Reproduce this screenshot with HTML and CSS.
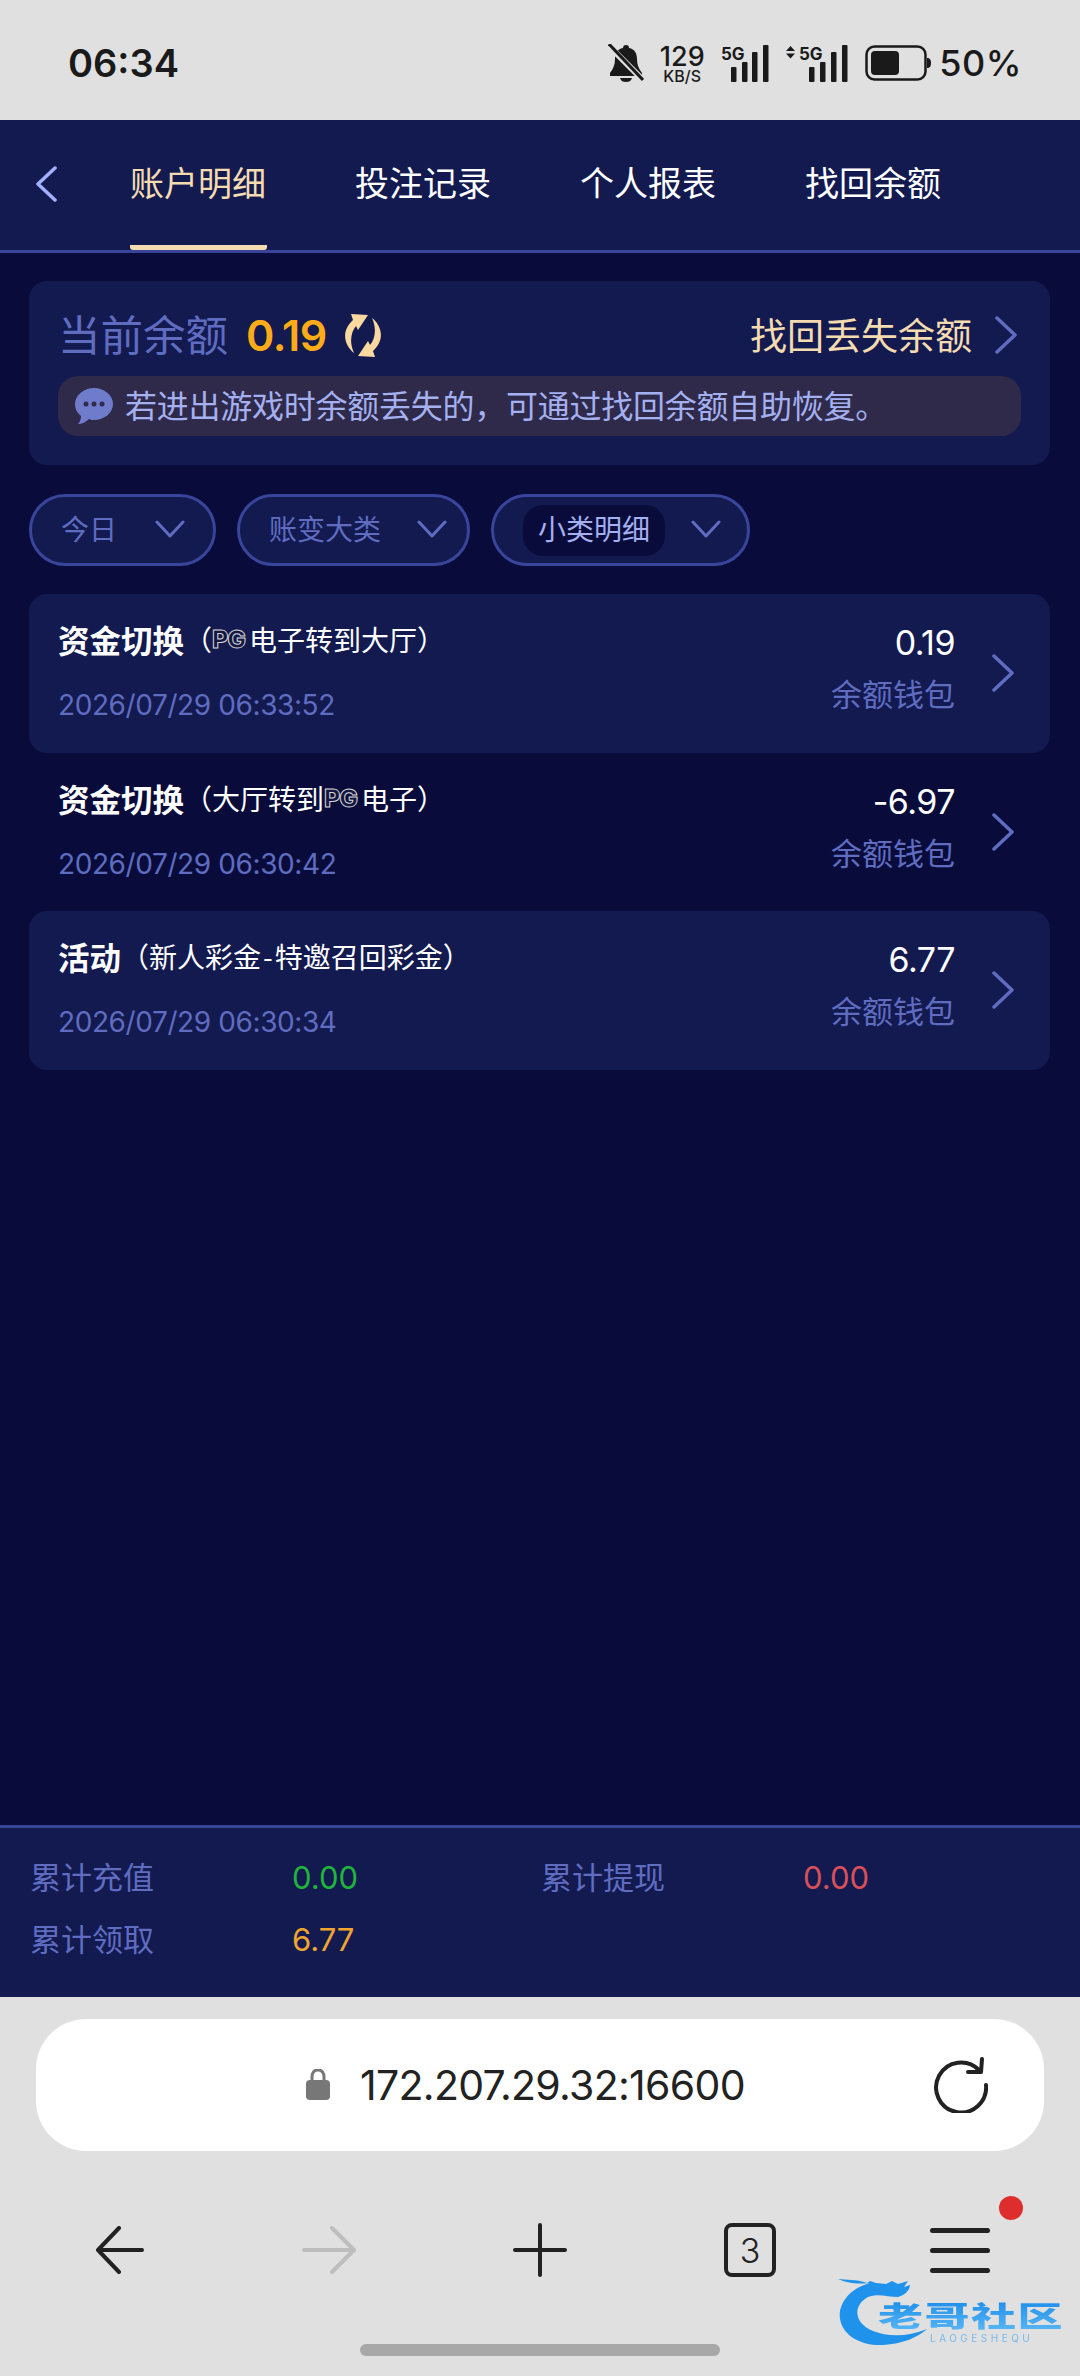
FILE: index.html
```html
<!DOCTYPE html>
<html lang="zh-CN">
<head>
    <meta charset="UTF-8">
    <meta name="viewport" content="width=device-width, initial-scale=1.0">
    <title>账户明细</title>
    <link rel="stylesheet" href="styles.css">
</head>
<body>
    <div class="status-bar">
        <div class="time">06:34</div>
        <div class="status-icons">
            <svg class="bell" width="36" height="38" viewBox="0 0 36 38">
                <path d="M18 1c2 0 3 1 3 3 6 1 8 6 8 11 0 6 2 10 5 14v3H2v-3c3-4 5-8 5-14 0-5 2-10 8-11 0-2 1-3 3-3z" fill="#1a1a1a"/>
                <path d="M12 34h12c-1 3-3 4-6 4s-5-1-6-4z" fill="#1a1a1a"/>
                <path d="M0 1l36 36" stroke="#e0e0e0" stroke-width="6"/>
                <path d="M1 0l34 36" stroke="#1a1a1a" stroke-width="3"/>
            </svg>
            <div class="speed">
                <div class="speed-num">129</div>
                <div class="speed-unit">KB/S</div>
            </div>
            <svg class="signal" width="48" height="38" viewBox="0 0 48 38">
                <text x="0" y="16" class="sig-text">5G</text>
                <rect x="10" y="23" width="5.5" height="15" rx="1"/>
                <rect x="21" y="18" width="5.5" height="20" rx="1"/>
                <rect x="31" y="8" width="5.5" height="30" rx="1"/>
                <rect x="42" y="1" width="5.5" height="37" rx="1"/>
            </svg>
            <svg class="signal" width="62" height="38" viewBox="0 0 62 38">
                <path d="M0 7l4.500-5 4.500 5zM0 9.500h9l-4.500 5z" fill="#1a1a1a"/>
                <text x="13" y="16" class="sig-text">5G</text>
                <rect x="23" y="23" width="5.500" height="15" rx="1"/>
                <rect x="34" y="18" width="5.500" height="20" rx="1"/>
                <rect x="45" y="8" width="5.500" height="30" rx="1"/>
                <rect x="56" y="1" width="5.500" height="37" rx="1"/>
            </svg>
            <svg class="battery" width="66" height="36" viewBox="0 0 66 36">
                <rect x="1.500" y="1.500" width="59" height="33" rx="8" fill="none" stroke="#1a1a1a" stroke-width="2.500"/>
                <rect x="6" y="6" width="28" height="24" rx="4" fill="#1a1a1a"/>
                <path d="M62 13c3 0 4 2 4 5s-1 5-4 5z" fill="#1a1a1a"/>
            </svg>
            <div class="battery-text">50%</div>
        </div>
    </div>

    <div class="nav">
        <svg class="nav-back" width="24" height="36" viewBox="0 0 24 36">
            <path d="M21 2L4 18l17 16" fill="none" stroke="#a4b0ff" stroke-width="3.500" stroke-linecap="round" stroke-linejoin="round"/>
        </svg>
        <div class="tabs">
            <div class="tab active">账户明细</div>
            <div class="tab">投注记录</div>
            <div class="tab">个人报表</div>
            <div class="tab">找回余额</div>
        </div>
    </div>

    <div class="main">
        <div class="balance-card">
            <div class="balance-top">
                <div class="balance-label">当前余额</div>
                <div class="balance-value">0.19</div>
                <svg class="refresh" width="42" height="43" viewBox="0 0 42 43">
                    <path d="M9 0L26 1 16 16 14 12C9 18 7 28 12 39 3 32-2 18 11 6z" fill="#fad9a0"/>
                    <path d="M9 0L26 1 16 16 14 12C9 18 7 28 12 39 3 32-2 18 11 6z" fill="#fad9a0" transform="rotate(180 21 21.500)"/>
                </svg>
                <div class="balance-link">找回丢失余额</div>
                <svg class="chev-right" width="24" height="38" viewBox="0 0 24 38">
                    <path d="M3 2l18 17L3 36" fill="none" stroke="#5f6cc0" stroke-width="3.500" stroke-linecap="round" stroke-linejoin="round"/>
                </svg>
            </div>
            <div class="balance-note">
                <svg class="note-icon" width="38" height="36" viewBox="0 0 38 36">
                    <path d="M19 0c10 0 19 7 19 16s-9 16-19 16c-2 0-3 0-5-1-3 3-7 5-11 5 2-2 3-5 3-8-4-3-6-7-6-12C0 7 9 0 19 0z" fill="#6f7ccb"/>
                    <circle cx="11" cy="16" r="2.500" fill="#2f2a4a"/>
                    <circle cx="19" cy="16" r="2.500" fill="#2f2a4a"/>
                    <circle cx="27" cy="16" r="2.500" fill="#2f2a4a"/>
                </svg>
                <span class="note-text">若进出游戏时余额丢失的，可通过找回余额自助恢复。</span>
            </div>
        </div>

        <div class="filters">
            <div class="filter filter-date">
                <span class="filter-text">今日</span>
                <svg class="filter-arrow" width="30" height="18" viewBox="0 0 30 18"><path d="M2 2l13 14L28 2"/></svg>
            </div>
            <div class="filter filter-type">
                <span class="filter-text">账变大类</span>
                <svg class="filter-arrow" width="30" height="18" viewBox="0 0 30 18"><path d="M2 2l13 14L28 2"/></svg>
            </div>
            <div class="filter filter-sub">
                <span class="filter-text selected">小类明细</span>
                <svg class="filter-arrow" width="30" height="18" viewBox="0 0 30 18"><path d="M2 2l13 14L28 2"/></svg>
            </div>
        </div>

        <div class="records">
            <div class="record odd">
                <div class="record-left">
                    <div class="record-title"><b>资金切换</b><span>（</span><span class="pg">PG</span><span>电子转到大厅）</span></div>
                    <div class="record-date">2026/07/29 06:33:52</div>
                </div>
                <div class="record-right">
                    <div class="record-amount">0.19</div>
                    <div class="record-wallet">余额钱包</div>
                </div>
                <svg class="chev-right" width="24" height="38" viewBox="0 0 24 38"><path d="M3 2l18 17L3 36" fill="none" stroke="#5f6cc0" stroke-width="3.500" stroke-linecap="round" stroke-linejoin="round"/></svg>
            </div>
            <div class="record">
                <div class="record-left">
                    <div class="record-title"><b>资金切换</b><span>（大厅转到</span><span class="pg">PG</span><span>电子）</span></div>
                    <div class="record-date">2026/07/29 06:30:42</div>
                </div>
                <div class="record-right">
                    <div class="record-amount">-6.97</div>
                    <div class="record-wallet">余额钱包</div>
                </div>
                <svg class="chev-right" width="24" height="38" viewBox="0 0 24 38"><path d="M3 2l18 17L3 36" fill="none" stroke="#5f6cc0" stroke-width="3.500" stroke-linecap="round" stroke-linejoin="round"/></svg>
            </div>
            <div class="record odd">
                <div class="record-left">
                    <div class="record-title"><b>活动</b><span>（新人彩金<span class="dash">-</span>特邀召回彩金）</span></div>
                    <div class="record-date">2026/07/29 06:30:34</div>
                </div>
                <div class="record-right">
                    <div class="record-amount">6.77</div>
                    <div class="record-wallet">余额钱包</div>
                </div>
                <svg class="chev-right" width="24" height="38" viewBox="0 0 24 38"><path d="M3 2l18 17L3 36" fill="none" stroke="#5f6cc0" stroke-width="3.500" stroke-linecap="round" stroke-linejoin="round"/></svg>
            </div>
        </div>
    </div>

    <div class="totals">
        <div class="total-label">累计充值</div>
        <div class="total-value green">0.00</div>
        <div class="total-label">累计提现</div>
        <div class="total-value red">0.00</div>
        <div class="total-label">累计领取</div>
        <div class="total-value orange">6.77</div>
    </div>

    <div class="browser">
        <div class="url-bar">
            <svg class="lock" width="26" height="32" viewBox="0 0 26 32">
                <path d="M7 14V8c0-4 2-7 6-7s6 3 6 7v6" fill="none" stroke="#777" stroke-width="3"/>
                <rect x="1" y="11" width="24" height="20" rx="4" fill="#777"/>
            </svg>
            <div class="url-text">172.207.29.32:16600</div>
            <svg class="reload" width="56" height="56" viewBox="0 0 56 56">
                <path d="M47 13a25 25 0 1 0 7 15" fill="none" stroke="#222" stroke-width="4" stroke-linecap="round"/>
                <path d="M36 15l13 0 1-13" fill="none" stroke="#222" stroke-width="4" stroke-linecap="round" stroke-linejoin="round"/>
            </svg>
        </div>
        <div class="toolbar">
            <div class="tool">
                <svg width="50" height="48" viewBox="0 0 50 48"><path d="M47 24H3M24 2L3 24l21 22" fill="none" stroke="#222" stroke-width="4" stroke-linecap="round" stroke-linejoin="round"/></svg>
            </div>
            <div class="tool">
                <svg width="56" height="48" viewBox="0 0 56 48"><path d="M2 24h50M30 2l22 22-22 22" fill="none" stroke="#bdbdbd" stroke-width="4" stroke-linecap="round" stroke-linejoin="round"/></svg>
            </div>
            <div class="tool">
                <svg width="54" height="54" viewBox="0 0 54 54"><path d="M2 27h50M27 2v50" fill="none" stroke="#222" stroke-width="4" stroke-linecap="round"/></svg>
            </div>
            <div class="tool">
                <div class="tab-count">3</div>
            </div>
            <div class="tool">
                <div class="menu">
                    <span class="menu-line"></span>
                    <span class="menu-line"></span>
                    <span class="menu-line"></span>
                    <span class="menu-dot"></span>
                </div>
            </div>
        </div>
        <div class="home-bar"></div>
    </div>

    <div class="watermark">
        <svg class="wm-dragon" width="92" height="72" viewBox="0 0 92 72">
            <path d="M32 8C10 14 0 30 2 44c3 18 23 27 43 26 20-1 35-8 44-16-19 8-39 8-54 2-20-8-20-26-5-34 10-4 20 0 30 0 8-2 12-8 12-12l-6 2 4-6-10 3-6-3-6 3-10-1-6-2-3 2C18 4 8 5 0 4c12 5 20 5 32 4z" fill="#1f92ec"/>
        </svg>
        <div class="wm-name">老哥社区</div>
        <div class="wm-sub">LAOGESHEQU</div>
    </div>
</body>
</html>
```

FILE: styles.css
```css
:root {
    --page: #090c3b;
    --panel: #131a50;
    --line: #39459a;
    --muted: #5f6cc0;
    --cream: #f5dcb0;
    --chrome: #e0e0e0;
    --cjk: "Noto Sans CJK SC", sans-serif;
}

* {
    margin: 0;
    padding: 0;
    box-sizing: border-box;
}

body {
    position: relative;
    display: flex;
    flex-direction: column;
    width: 1080px;
    height: 2376px;
    overflow: hidden;
    background: var(--page);
    font-family: Inter, "Noto Sans CJK SC", sans-serif;
}

/* status bar */
.status-bar {
    display: flex;
    justify-content: space-between;
    align-items: center;
    height: 120px;
    padding: 6px 58px 0 68px;
    background: var(--chrome);
    color: #1a1a1a;
}

.time {
    font-size: 38px;
    font-weight: 600;
}

.status-icons {
    display: flex;
    align-items: center;
}

.bell {
    margin-right: 15px;
}

.speed {
    width: 46px;
    margin-right: 16px;
    text-align: center;
    font-weight: 500;
}

.speed-num {
    font-size: 27px;
    line-height: 25px;
}

.speed-unit {
    font-size: 16px;
    line-height: 14px;
    white-space: nowrap;
}

.signal {
    margin-right: 17px;
    fill: #1a1a1a;
}

.sig-text {
    font-size: 17px;
    font-weight: 700;
    font-family: Inter, sans-serif;
}

.battery {
    margin-right: 8px;
}

.battery-text {
    font-size: 36px;
    font-weight: 500;
    letter-spacing: 0.5px;
}

/* tabs */
.nav {
    display: flex;
    align-items: stretch;
    height: 133px;
    padding-left: 34px;
    background: var(--panel);
    border-bottom: 3px solid var(--line);
}

.nav-back {
    align-self: center;
    margin-top: -2px;
}

.tabs {
    display: flex;
    gap: 88px;
    margin-left: 72px;
}

.tab {
    display: flex;
    align-items: center;
    width: 137px;
    padding-bottom: 2px;
    border-bottom: 5px solid transparent;
    border-radius: 3px;
    color: #ffffff;
    font-family: var(--cjk);
    font-size: 34px;
    white-space: nowrap;
}

.tab.active {
    color: var(--cream);
    border-bottom-color: var(--cream);
}

/* page */
.main {
    flex: 1;
    padding: 28px 30px 0 29px;
}

.balance-card {
    height: 184px;
    padding: 29px 29px 0;
    border-radius: 18px;
    background: var(--panel);
}

.balance-top {
    display: flex;
    align-items: center;
    height: 50px;
}

.balance-label {
    padding-bottom: 5px;
    color: var(--muted);
    font-family: var(--cjk);
    font-size: 42.500px;
}

.balance-value {
    margin-left: 18px;
    color: #fdab17;
    font-size: 43px;
    font-weight: 600;
    letter-spacing: -0.5px;
}

.refresh {
    margin-left: 15px;
}

.balance-link {
    margin-left: auto;
    padding-bottom: 2px;
    color: var(--cream);
    font-family: var(--cjk);
    font-size: 37px;
}

.balance-top .chev-right {
    margin: 0 3px 0 22px;
}

.balance-note {
    display: flex;
    align-items: center;
    height: 60px;
    margin-top: 16px;
    padding-left: 17px;
    border-radius: 20px;
    background: #2f2a4a;
    color: #a4b0f0;
    font-family: var(--cjk);
    font-size: 32px;
    letter-spacing: -0.25px;
}

.note-icon {
    margin-right: 12px;
}

.note-text {
    padding-bottom: 5px;
}

.filters {
    display: flex;
    gap: 21px;
    margin-top: 29px;
}

.filter {
    display: flex;
    align-items: center;
    justify-content: space-between;
    height: 72px;
    border: 3px solid var(--line);
    border-radius: 36px;
    background: var(--panel);
    color: var(--muted);
    font-family: var(--cjk);
    font-size: 28px;
}

.filter-date {
    width: 187px;
    padding: 0 28px 0 29px;
}

.filter-type {
    width: 233px;
    padding: 0 20px 0 29px;
}

.filter-sub {
    width: 259px;
    padding: 0 26px 0 29px;
}

.filter-text {
    padding-bottom: 4px;
}

.filter-arrow {
    margin-bottom: 2px;
    fill: none;
    stroke: var(--muted);
    stroke-width: 3;
    stroke-linecap: round;
    stroke-linejoin: round;
}

.filter-text.selected {
    padding: 3px 15px 8px;
    border-radius: 20px;
    background: var(--page);
    color: #a4b0f0;
}

.records {
    margin-top: 28px;
}

.record {
    display: flex;
    align-items: flex-start;
    height: 158.67px;
    padding: 0 35px 0 29px;
    border-radius: 18px;
}

.record.odd {
    background: var(--panel);
}

.record-left {
    flex: 1;
    padding-top: 23px;
}

.record-title {
    display: flex;
    align-items: center;
    height: 44px;
    color: #ffffff;
    font-family: var(--cjk);
    font-size: 28px;
    white-space: nowrap;
}

.record-title b {
    font-size: 31.500px;
    font-weight: 700;
}

.dash {
    padding: 0 2px;
}

.pg {
    width: 37px;
    color: #14173f;
    font-family: Inter, sans-serif;
    font-size: 25px;
    font-weight: 800;
    letter-spacing: -1px;
    -webkit-text-stroke: 1px #d8d8d8;
}

.record-date {
    margin-top: 24px;
    color: var(--muted);
    font-size: 28px;
    letter-spacing: -0.4px;
    line-height: 40px;
}

.record-right {
    padding-top: 27px;
    text-align: right;
}

.record-amount {
    color: #ffffff;
    font-size: 34px;
    letter-spacing: -0.5px;
    line-height: 44px;
}

.record-wallet {
    margin-top: 6px;
    color: var(--muted);
    font-family: var(--cjk);
    font-size: 31px;
    line-height: 44px;
}

.record .chev-right {
    margin: 60px 0 0 36px;
}

/* totals */
.totals {
    display: grid;
    grid-template-columns: 262px 249px 262px 1fr;
    grid-auto-rows: 62px;
    align-items: center;
    height: 172px;
    padding: 18px 30px 0;
    border-top: 3px solid var(--line);
    background: var(--panel);
}

.total-label {
    padding-bottom: 3px;
    color: var(--muted);
    font-family: var(--cjk);
    font-size: 31px;
}

.total-value {
    font-size: 31px;
}

.green {
    color: #1fb53a;
}

.red {
    color: #d9505a;
}

.orange {
    color: #f0a52e;
}

/* browser chrome */
.browser {
    height: 379px;
    padding-top: 22px;
    background: var(--chrome);
}

.url-bar {
    display: flex;
    align-items: center;
    height: 132px;
    margin: 0 36px;
    padding: 0 56px 0 269px;
    border-radius: 50px;
    background: #ffffff;
}

.lock {
    margin-right: 29px;
}

.url-text {
    color: #222222;
    font-size: 41px;
    letter-spacing: -0.7px;
}

.reload {
    margin-left: auto;
}

.toolbar {
    display: grid;
    grid-template-columns: repeat(5, 210px);
    height: 60px;
    margin-top: 69px;
    padding-left: 15px;
}

.tool {
    display: flex;
    align-items: center;
    justify-content: center;
}

.tab-count {
    display: flex;
    align-items: center;
    justify-content: center;
    width: 52px;
    height: 54px;
    border: 4px solid #222;
    border-radius: 8px;
    color: #222;
    font-size: 34px;
    font-weight: 300;
}

.menu {
    position: relative;
    display: flex;
    flex-direction: column;
    gap: 15px;
    width: 60px;
}

.menu-line {
    height: 5px;
    border-radius: 3px;
    background: #222;
}

.menu-dot {
    position: absolute;
    top: -32px;
    right: -33px;
    width: 24px;
    height: 24px;
    border-radius: 50%;
    background: #de2d2d;
}

.home-bar {
    width: 360px;
    height: 12px;
    margin: 64px auto 0;
    border-radius: 6px;
    background: #a8a8a8;
}

/* watermark */
.watermark {
    position: absolute;
    left: 838px;
    top: 2275px;
    width: 222px;
    height: 72px;
    filter: blur(0.6px);
}

.wm-dragon {
    position: absolute;
    left: 0;
    top: 0;
}

.wm-name {
    position: absolute;
    left: 40px;
    top: 14px;
    padding: 11px 0;
    background: linear-gradient(#1b8dea, #58b6f5);
    -webkit-background-clip: text;
    background-clip: text;
    color: transparent;
    font-family: var(--cjk);
    font-size: 45px;
    font-weight: 900;
    letter-spacing: 1.500px;
    line-height: 30px;
    white-space: nowrap;
    transform: scaleY(0.62);
}

.wm-sub {
    position: absolute;
    left: 92px;
    top: 57px;
    color: #7ab8ea;
    font-size: 10px;
    letter-spacing: 3.500px;
    white-space: nowrap;
}
```
